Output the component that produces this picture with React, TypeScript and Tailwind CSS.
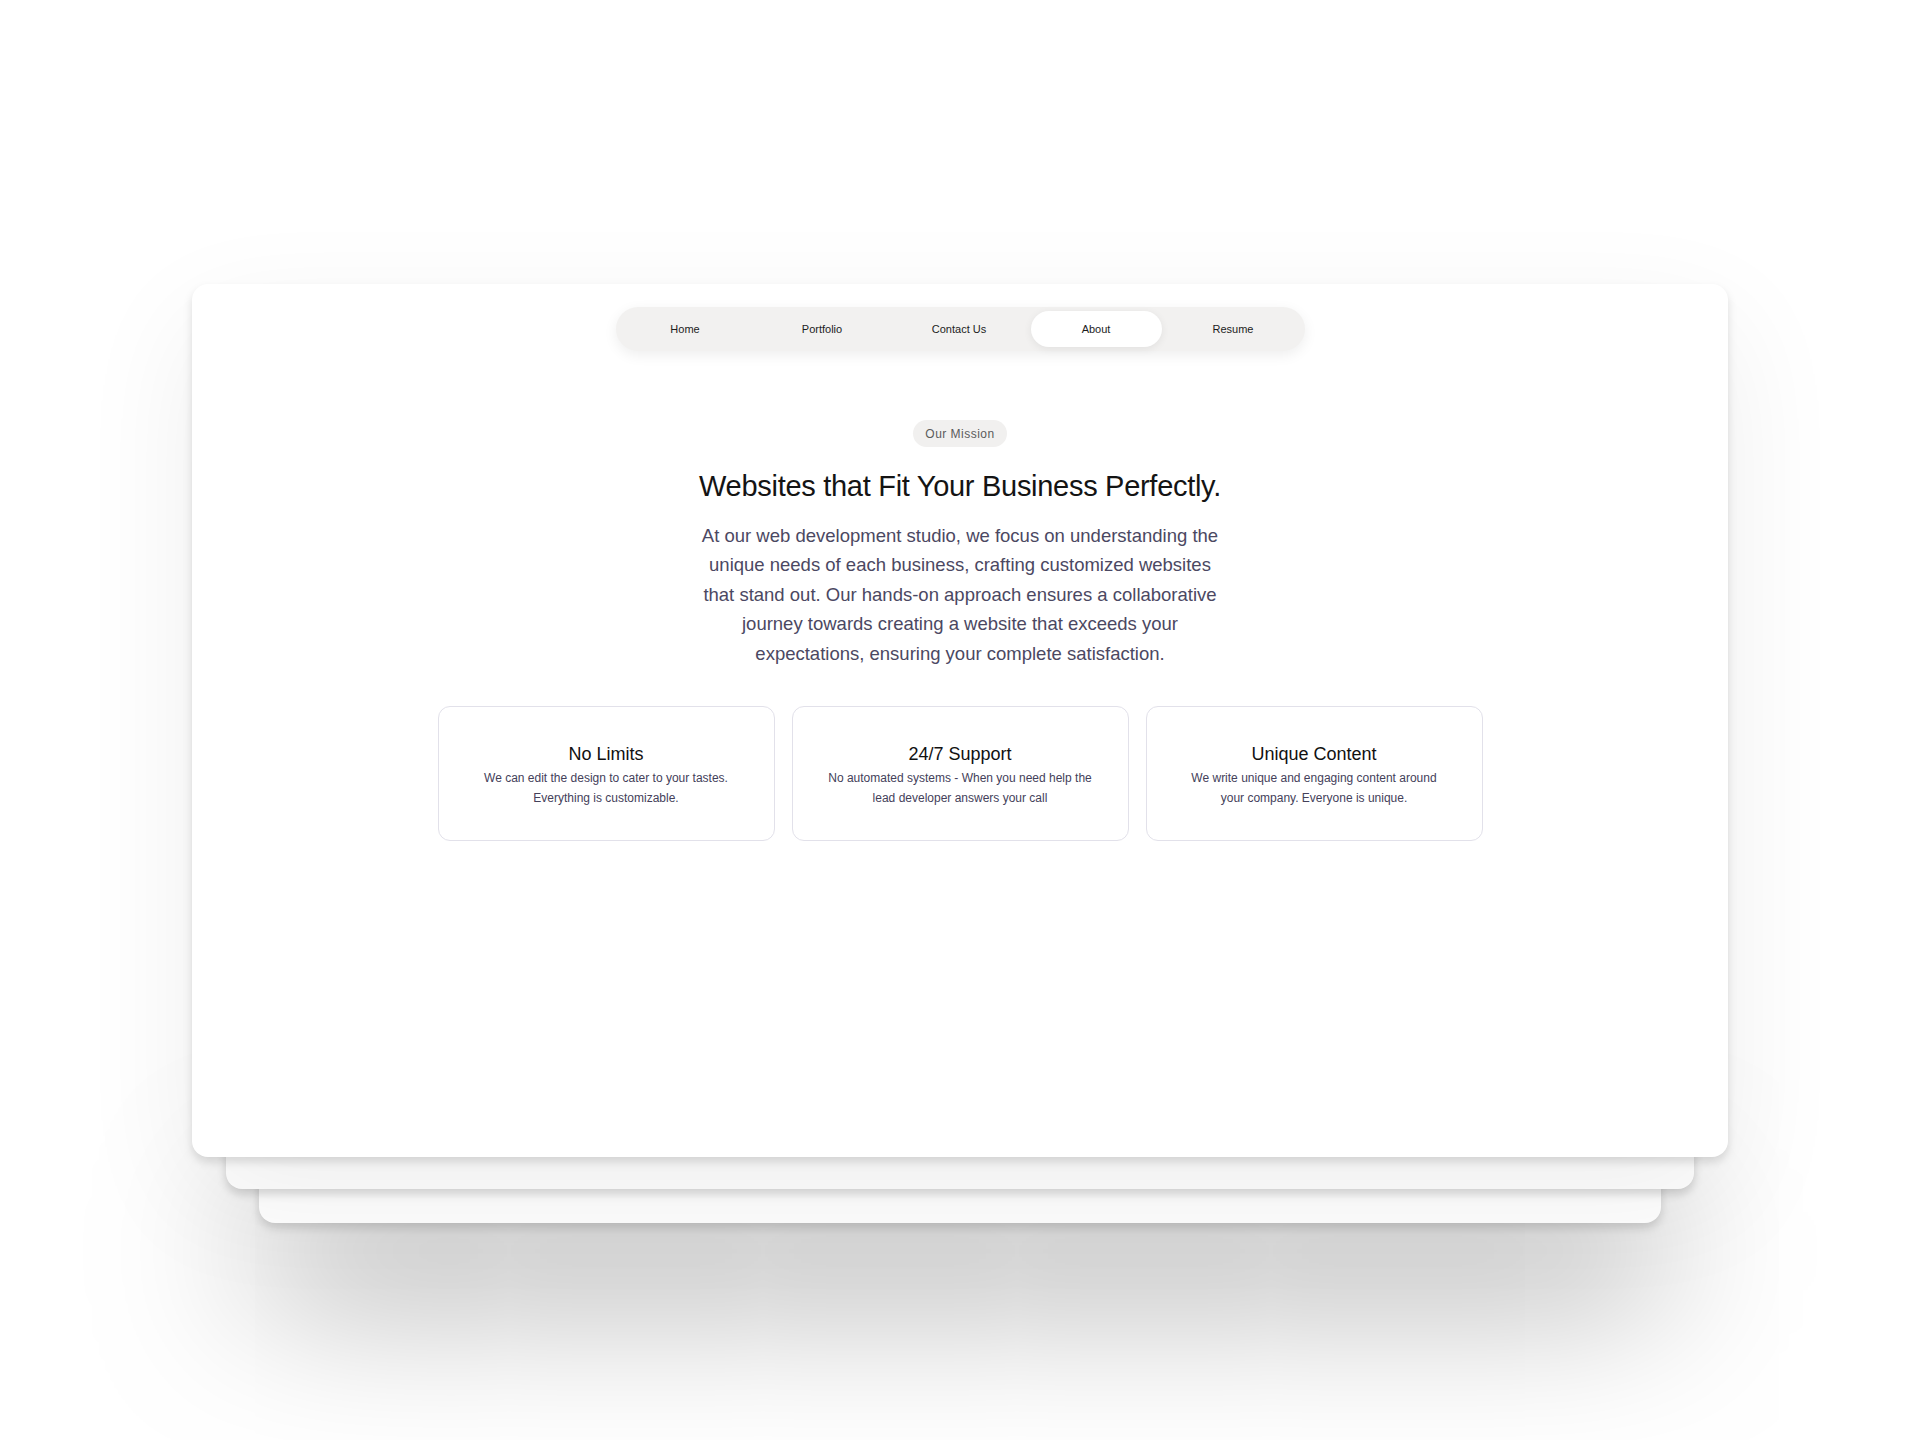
import { useState } from "react";

const navItems = ["Home", "Portfolio", "Contact Us", "About", "Resume"];

const features = [
  {
    title: "No Limits",
    text: "We can edit the design to cater to your tastes. Everything is customizable.",
  },
  {
    title: "24/7 Support",
    text: "No automated systems - When you need help the lead developer answers your call",
  },
  {
    title: "Unique Content",
    text: "We write unique and engaging content around your company. Everyone is unique.",
  },
];

function NavBar() {
  const [active, setActive] = useState("About");

  return (
    <nav className="flex h-[44px] w-[689px] items-center gap-[6px] rounded-full bg-[#f2f1f0] p-[4px] shadow-[0_4px_14px_rgba(0,0,0,0.07)]">
      {navItems.map((item) => (
        <button
          key={item}
          onClick={() => setActive(item)}
          className={`h-[36px] w-[131px] rounded-full pt-[1px] text-[11px] text-[#1c1c1c] ${
            active === item ? "bg-white shadow-[0_2px_8px_rgba(0,0,0,0.07)]" : ""
          }`}
        >
          {item}
        </button>
      ))}
    </nav>
  );
}

function FeatureCard({ title, text }: { title: string; text: string }) {
  return (
    <div className="flex h-[135px] flex-col items-center justify-center rounded-xl border border-[#e2e1ea] bg-white pt-[2px] text-center">
      <h3 className="text-[18px] leading-6 text-[#111]">{title}</h3>
      <p className="mt-[2px] w-[266px] text-[12px] leading-[20px] text-[#44415a]">{text}</p>
    </div>
  );
}

export default function App() {
  return (
    <div className="min-h-[1440px] overflow-hidden bg-white font-['Liberation_Sans',Arial,sans-serif]">
      <div className="mx-auto flex w-[1536px] flex-col pt-[284px]">
        {/* front card */}
        <section className="relative z-30 flex h-[873px] flex-col items-center rounded-2xl bg-white pt-[23px] shadow-[0_5px_10px_rgba(0,0,0,0.13),0_40px_120px_rgba(0,0,0,0.07)]">
          <NavBar />

          <span className="mt-[69px] flex h-[27px] w-[94px] items-center justify-center rounded-full bg-[#f1f0ef] text-[12px] tracking-[0.04em] text-[#5b5b5b]">
            Our Mission
          </span>

          <h1 className="mt-[21px] text-[29px] leading-[36px] tracking-[-0.01em] text-[#141414]">
            Websites that Fit Your Business Perfectly.
          </h1>

          <p className="mt-[17px] max-w-[530px] text-center text-[18.5px] leading-[29.4px] text-[#4b4862]">
            At our web development studio, we focus on understanding the unique needs of each
            business, crafting customized websites that stand out. Our hands-on approach ensures a
            collaborative journey towards creating a website that exceeds your expectations,
            ensuring your complete satisfaction.
          </p>

          <div className="mt-[38px] grid w-[1045px] grid-cols-3 gap-[17px]">
            {features.map((f) => (
              <FeatureCard key={f.title} title={f.title} text={f.text} />
            ))}
          </div>
        </section>

        {/* stacked pages behind */}
        <div className="relative z-20 mx-[34px] -mt-[32px] h-[64px] rounded-2xl bg-white shadow-[0_5px_10px_rgba(0,0,0,0.16)]" />
        <div className="relative z-10 mx-[67px] -mt-[30px] h-[64px] rounded-2xl bg-white shadow-[0_5px_10px_rgba(0,0,0,0.14),0_60px_160px_rgba(0,0,0,0.5)]" />
      </div>
    </div>
  );
}
